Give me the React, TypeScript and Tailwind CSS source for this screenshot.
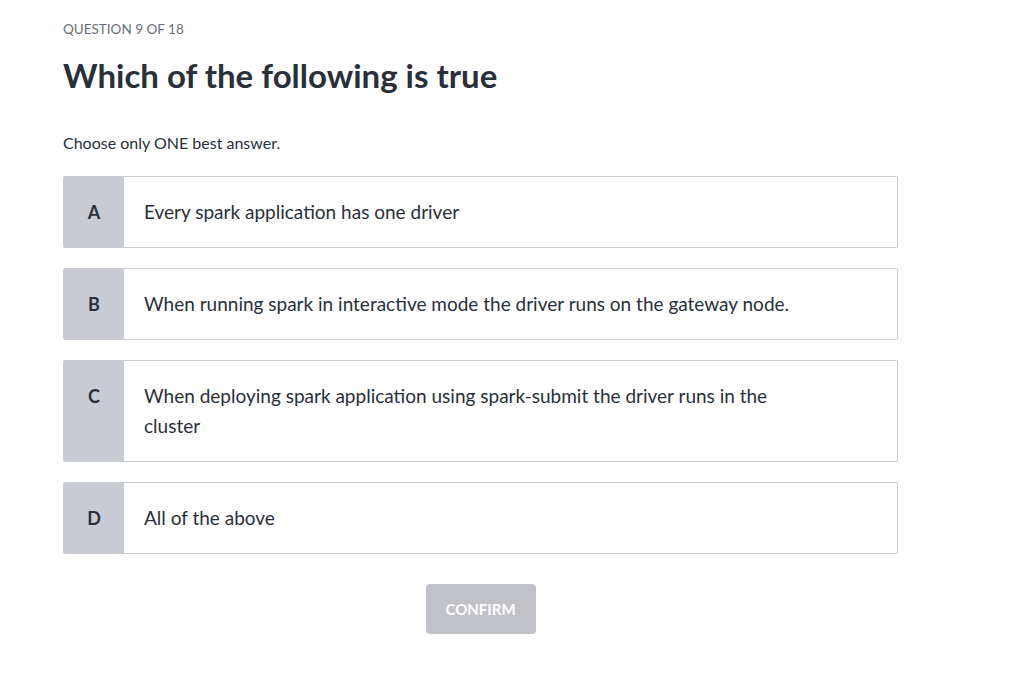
import React from 'react';

const answers = [
  { key: 'A', text: 'Every spark application has one driver' },
  { key: 'B', text: 'When running spark in interactive mode the driver runs on the gateway node.' },
  { key: 'C', text: 'When deploying spark application using spark-submit the driver runs in the cluster' },
  { key: 'D', text: 'All of the above' },
];

export default function App() {
  return (
    <div className="min-h-screen bg-white text-[#29303b] font-['Lato','Liberation_Sans',sans-serif]">
      <div className="w-[835px] ml-[63px] pt-[20px]">
        <div className="text-[13.5px] leading-[18px] text-[#686f7a] uppercase">Question 9 of 18</div>
        <h1 className="mt-[17px] text-[33px] leading-[40px] font-bold">Which of the following is true</h1>

        <p className="mt-[37px] text-[16px] leading-[22px]">Choose only ONE best answer.</p>

        <div className="mt-[22px] flex flex-col gap-[20px]">
          {answers.map((a) => (
            <div key={a.key} className="flex border border-[#cbcdd3] rounded-[2px] overflow-hidden">
              <div className="w-[60px] shrink-0 bg-[#c9cbd2] py-[20px] text-center text-[18px] leading-[30px] font-bold">
                {a.key}
              </div>
              <div className="flex-1 pl-[20px] pr-[88px] py-[20px] text-[19px] leading-[30px]">{a.text}</div>
            </div>
          ))}
        </div>

        <div className="mt-[30px] flex justify-center">
          <button className="w-[110px] h-[50px] rounded-[4px] bg-[#c1c2c8] text-white text-[15px] font-bold">
            CONFIRM
          </button>
        </div>
      </div>
    </div>
  );
}
